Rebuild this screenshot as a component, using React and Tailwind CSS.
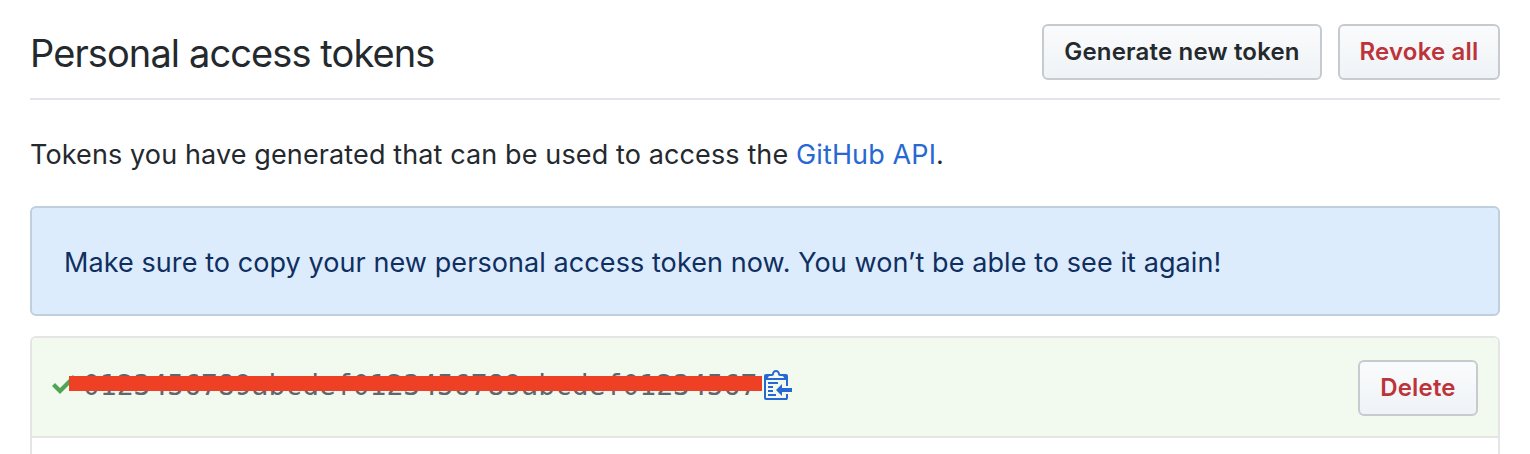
const buttonBase =
  'flex h-14 items-center justify-center rounded-[6px] border-2 border-[#c6cbd1] bg-linear-to-b from-[#fafbfc] to-[#eff3f6] bg-origin-border text-[24px] font-semibold tracking-[0.18px] whitespace-nowrap';

// Dummy value: the real token is never rendered.
const MASKED_TOKEN = '0123456789abcdef0123456789abcdef01234567';

function CheckIcon() {
  return (
    <svg className="h-8 w-6 shrink-0 fill-[#4fa553]" viewBox="0 0 12 16" aria-hidden="true">
      <path d="M12 5l-8 8-4-4 1.5-1.5L4 10l6.5-6.5L12 5z" />
    </svg>
  );
}

function ClippyIcon() {
  return (
    <svg className="h-8 w-7 shrink-0 fill-[#2768d3]" viewBox="0 0 14 16" aria-hidden="true">
      <path d="M2 13h4v1H2v-1zm5-6H2v1h5V7zm2 3V8l-3 3 3 3v-2h5v-2H9zM4.5 9H2v1h2.5V9zM2 12h2.5v-1H2v1zm9 1h1v2c-.02.28-.11.52-.3.7-.19.18-.42.28-.7.3H1c-.55 0-1-.45-1-1V4c0-.55.45-1 1-1h3c0-1.11.89-2 2-2 1.11 0 2 .89 2 2h3c.55 0 1 .45 1 1v5h-1V6H1v9h10v-2zM2 5h8c0-.55-.45-1-1-1H8c-.55 0-1-.45-1-1s-.45-1-1-1-1 .45-1 1-.45 1-1 1H3c-.55 0-1 .45-1 1z" />
    </svg>
  );
}

export default function App() {
  return (
    <main className="h-[454px] overflow-hidden bg-white px-[30px] pt-6 font-['Inter',sans-serif] text-[#24292e]">
      <header className="flex h-19 items-start justify-between border-b-2 border-[#e1e4e8]">
        <h1 className="text-[38px] leading-[58px] tracking-[-0.9px] whitespace-nowrap">Personal access tokens</h1>
        <div className="flex gap-4">
          <button className={`${buttonBase} w-[280px]`}>Generate new token</button>
          <button className={`${buttonBase} w-[162px] text-[#bc3439]`}>Revoke all</button>
        </div>
      </header>

      <p className="mt-[34px] text-[27px] leading-[42px] tracking-[0.12px] whitespace-nowrap">
        Tokens you have generated that can be used to access the{' '}
        <a className="text-[#2768d3]">GitHub API</a>.
      </p>

      <div className="mt-[30px] flex h-[110px] items-center rounded-[6px] border-2 border-[#bfcfde] bg-[#ddecfd] px-8 pt-1 text-[27px] tracking-[0.08px] whitespace-nowrap text-[#0f2f61]">
        <span>Make sure to copy your new personal access token now. You won’t be able to see it again!</span>
      </div>

      <section className="mt-5 h-40 overflow-hidden rounded-t-[6px] border-2 border-[#e4e5e4]">
        <div className="flex h-[100px] items-start justify-between border-b-2 border-[#e4e5e4] bg-[#f2f9ef] px-5 pt-[22px]">
          <div className="relative mt-2 flex h-8 items-center">
            <CheckIcon />
            <code className="ml-[7px] w-[681px] pt-1 font-['DejaVu_Sans_Mono',monospace] text-[28px] leading-8 whitespace-nowrap text-[#5f666d]">
              {MASKED_TOKEN}
            </code>
            <ClippyIcon />
            <span className="absolute top-2 left-[17px] h-[15px] w-[693px] bg-[#ee4025]" />
          </div>
          <button className={`${buttonBase} w-[120px] text-[#bc3439]`}>Delete</button>
        </div>
      </section>
    </main>
  );
}
